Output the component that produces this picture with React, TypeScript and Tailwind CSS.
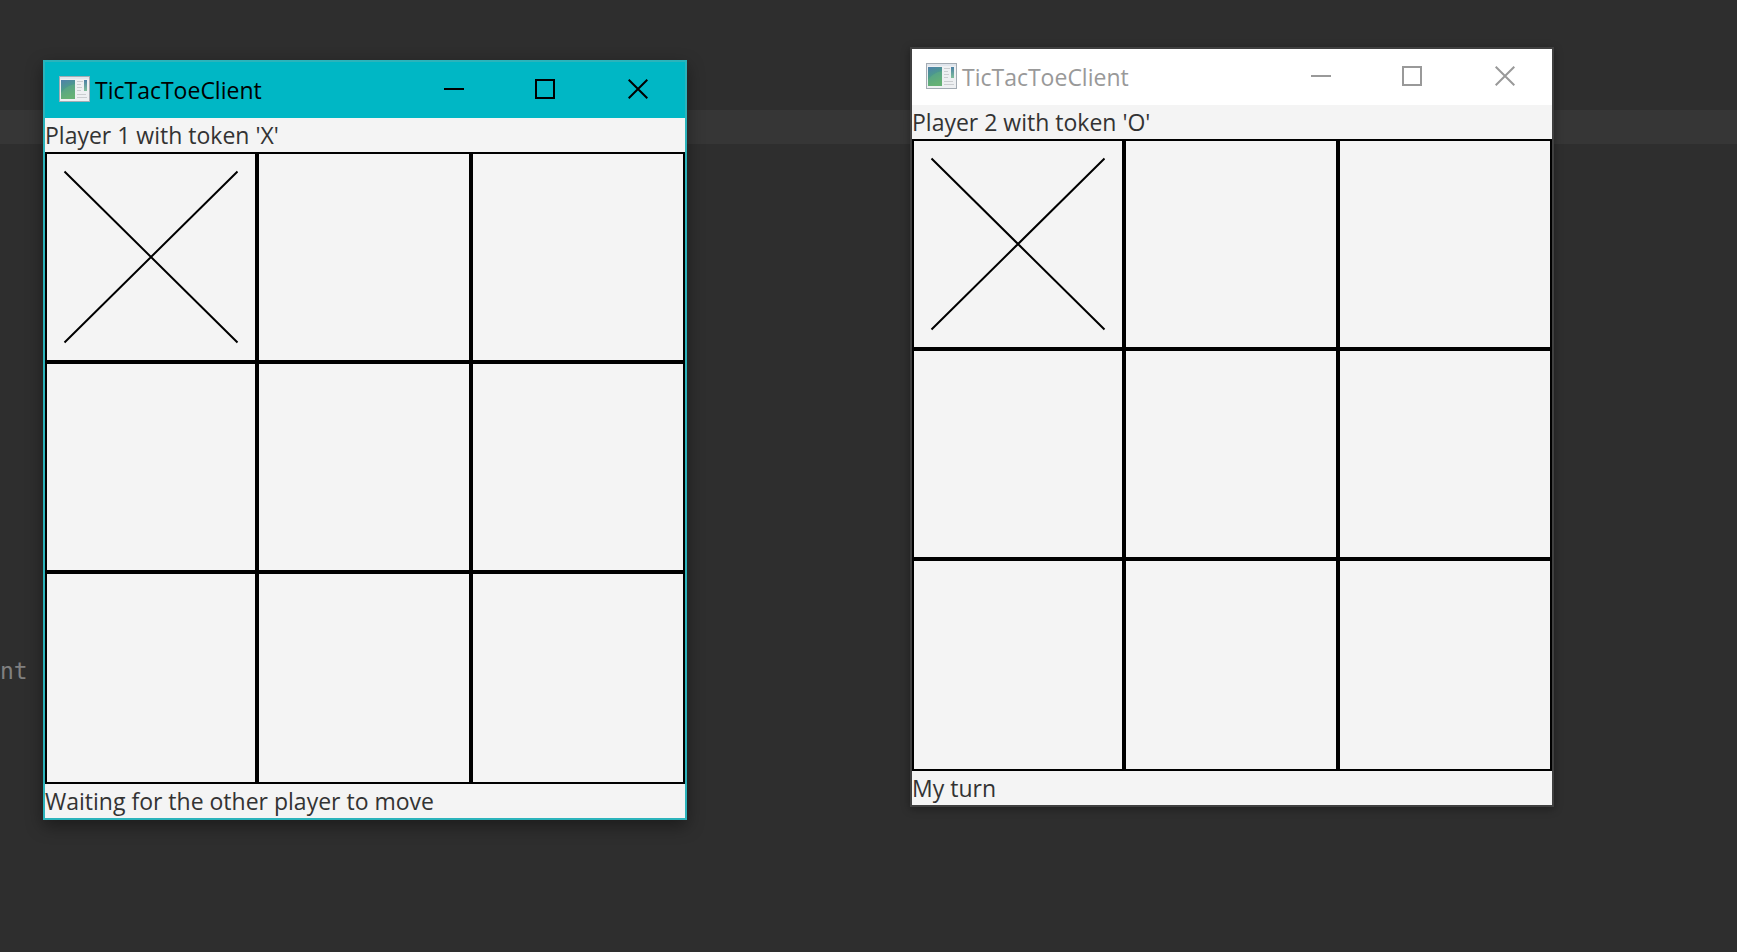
type Theme = {
  frame: string;
  title: string;
  text: string;
};

const active: Theme = {
  frame: "border-[#2bb3bb] shadow-[0_6px_16px_rgba(0,0,0,0.4)]",
  title: "bg-[#00b7c5]",
  text: "text-black",
};

const inactive: Theme = {
  frame: "border-[#404040] shadow-[0_2px_8px_rgba(0,0,0,0.35)]",
  title: "bg-white",
  text: "text-[#999999]",
};

function AppIcon() {
  return (
    <svg width="31" height="26" viewBox="0 0 31 26" aria-hidden="true">
      <defs>
        <linearGradient id="pane" x1="0" y1="0" x2="0.3" y2="1">
          <stop offset="0" stopColor="#4f80ab" />
          <stop offset="0.5" stopColor="#4c9a8c" />
          <stop offset="1" stopColor="#67b36a" />
        </linearGradient>
        <linearGradient id="strip" x1="0" y1="0" x2="0" y2="1">
          <stop offset="0" stopColor="#4b7fa5" />
          <stop offset="1" stopColor="#7fbf9a" />
        </linearGradient>
      </defs>
      <rect x="0.5" y="0.5" width="30" height="25" fill="#eef0f2" stroke="#a3abb3" />
      <rect x="1" y="1" width="29" height="2" fill="#dfe5ec" />
      <rect x="2" y="4" width="14" height="19" fill="url(#pane)" />
      <path d="M2 17C6 11 11 9 16 8V23H2Z" fill="#63b080" opacity="0.5" />
      <path d="M18 5.5h6M18 8.5h4M18 11.5h5M18 14.5h4M18 18.5h9M18 21.5h10" stroke="#cacdd0" strokeWidth="1" />
      <rect x="25" y="4" width="3" height="11" fill="url(#strip)" />
    </svg>
  );
}

function TitleBar({ theme }: { theme: Theme }) {
  return (
    <header className={`flex h-14 items-start pl-3.5 ${theme.title} ${theme.text}`}>
      <div className="flex h-[54px] items-center">
        <AppIcon />
      </div>
      <h1 className="ml-[5px] grow text-[23px] leading-[56px]">TicTacToeClient</h1>
      <button type="button" aria-label="Minimize" className="flex h-[54px] w-[90px] items-center justify-center">
        <svg width="20" height="20" viewBox="0 0 20 20" aria-hidden="true">
          <path d="M0 10H20" stroke="currentColor" strokeWidth="2" />
        </svg>
      </button>
      <button type="button" aria-label="Maximize" className="flex h-[54px] w-[92px] items-center justify-center">
        <svg width="20" height="20" viewBox="0 0 20 20" aria-hidden="true">
          <rect x="1" y="1" width="18" height="18" fill="none" stroke="currentColor" strokeWidth="2" />
        </svg>
      </button>
      <button type="button" aria-label="Close" className="flex h-[54px] w-[94px] items-center justify-center">
        <svg width="20" height="20" viewBox="0 0 20 20" aria-hidden="true">
          <path d="M0.7 0.7L19.3 19.3M19.3 0.7L0.7 19.3" stroke="currentColor" strokeWidth="2" />
        </svg>
      </button>
    </header>
  );
}

function Board() {
  const cells = ["X", "", "", "", "", "", "", "", ""];
  return (
    <div className="grid grow grid-cols-[212px_1fr_1fr] grid-rows-[210px_210px_212px]">
      {cells.map((cell, i) => (
        <button key={i} type="button" aria-label={`Cell ${i + 1}`} className="border-2 border-black">
          {cell === "X" && (
            <svg className="size-full" viewBox="0 0 208 206" aria-hidden="true">
              <path d="M17.5 17.5L190.5 188.5M190.5 17.5L17.5 188.5" stroke="black" strokeWidth="2" />
            </svg>
          )}
        </button>
      ))}
    </div>
  );
}

function GameWindow({ theme, place, player, status }: { theme: Theme; place: string; player: string; status: string }) {
  return (
    <section className={`absolute flex w-[644px] flex-col border-2 bg-[#f4f4f4] text-[#333333] ${theme.frame} ${place}`}>
      <TitleBar theme={theme} />
      <p className="text-[23px] leading-[34px]">{player}</p>
      <Board />
      <p className="text-[23px] leading-[34px]">{status}</p>
    </section>
  );
}

export default function App() {
  return (
    <main className="relative min-h-screen overflow-hidden bg-[#2e2e2e] font-['Open_Sans','Noto_Sans',sans-serif]">
      <div className="absolute inset-x-0 top-[110px] h-[34px] bg-[#363636]" />
      <span className="absolute top-[655px] left-0 font-['DejaVu_Sans_Mono',monospace] text-[23px] leading-8 text-[#808080]">nt</span>
      <GameWindow theme={active} place="left-[43px] top-[60px]" player="Player 1 with token 'X'" status="Waiting for the other player to move" />
      <GameWindow theme={inactive} place="left-[910px] top-[47px]" player="Player 2 with token 'O'" status="My turn" />
    </main>
  );
}
